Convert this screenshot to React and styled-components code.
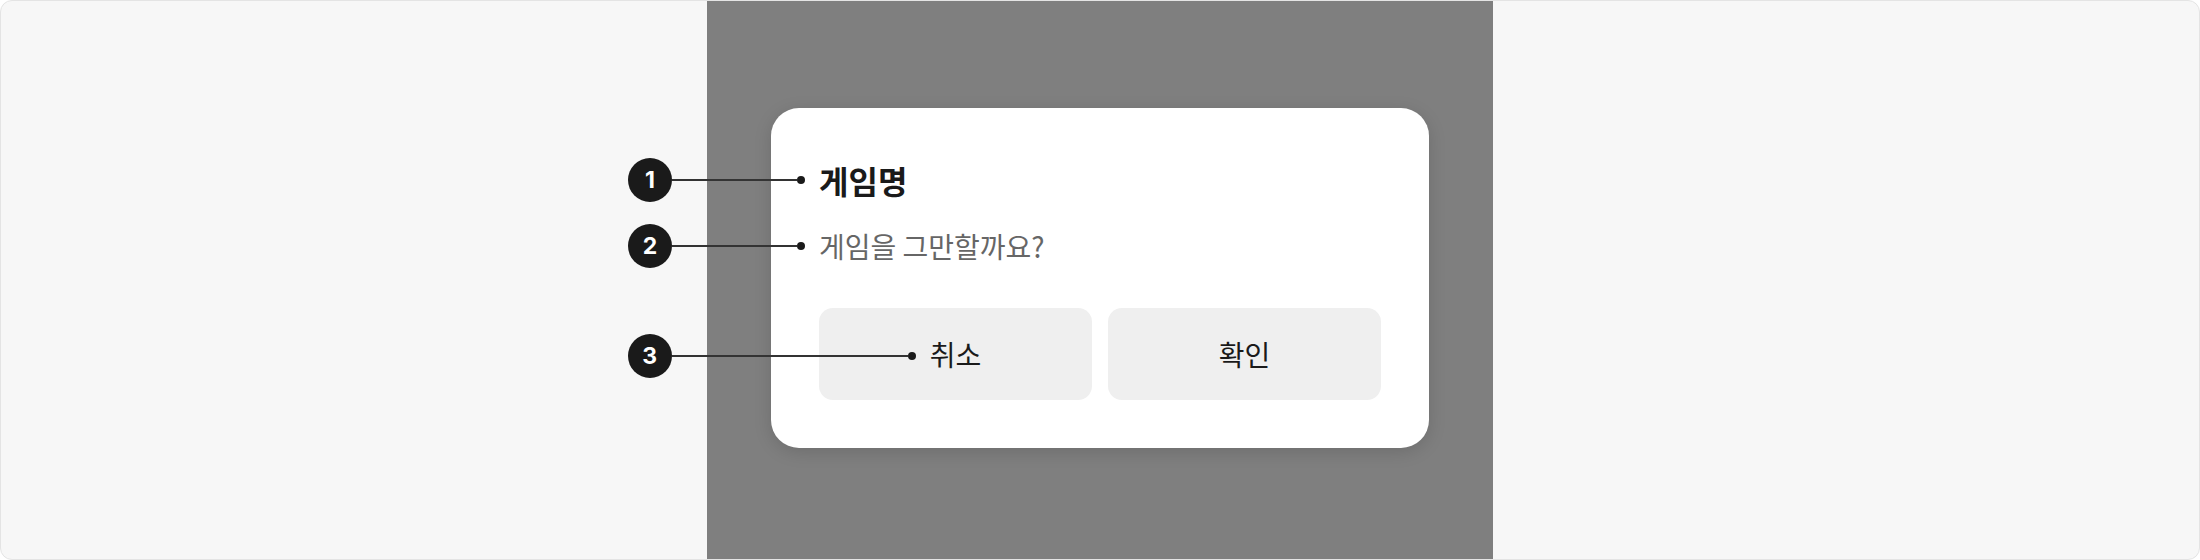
import React from "react";
import styled, { createGlobalStyle } from "styled-components";

const GlobalStyle = createGlobalStyle`
  html, body {
    margin: 0;
    padding: 0;
    background: #ffffff;
  }
  body {
    font-family: "Noto Sans CJK KR", "Noto Sans", sans-serif;
  }
  * { box-sizing: border-box; }
`;

const Frame = styled.div`
  width: 2200px;
  height: 560px;
  background: #f7f7f7;
  border: 1px solid #e4e4e4;
  border-radius: 12px;
  overflow: hidden;
  display: flex;
  justify-content: center;
`;

const Backdrop = styled.div`
  width: 786px;
  height: 100%;
  background: #7f7f7f;
  display: flex;
  align-items: center;
  justify-content: center;
  padding-bottom: 4px;
`;

const Dialog = styled.div`
  width: 658px;
  background: #ffffff;
  border-radius: 28px;
  padding: 48px;
  box-shadow: 0 4px 18px rgba(0, 0, 0, 0.14);
  display: flex;
  flex-direction: column;
`;

const Title = styled.h2`
  margin: 0;
  font-size: 32px;
  line-height: 48px;
  font-weight: 700;
  color: #1a1a1a;
`;

const Message = styled.p`
  margin: 22px 0 0;
  font-size: 28px;
  line-height: 40px;
  font-weight: 400;
  color: #666666;
`;

const Actions = styled.div`
  margin-top: 42px;
  display: grid;
  grid-template-columns: 1fr 1fr;
  gap: 16px;
`;

const ActionButton = styled.button`
  height: 92px;
  border: none;
  border-radius: 14px;
  background: #efefef;
  color: #1a1a1a;
  font-family: inherit;
  font-size: 28px;
  line-height: 40px;
  font-weight: 400;
  display: flex;
  align-items: center;
  justify-content: center;
  cursor: pointer;
`;

/* Annotated text: the callout hangs off the left edge of the label */
const Anchor = styled.span`
  position: relative;
  display: inline-block;
`;

const Callout = styled.span`
  position: absolute;
  top: 50%;
  right: calc(100% + 14px);
  width: ${(p) => p.$reach}px;
  height: 44px;
  margin-top: ${(p) => -22 + (p.$shift || 0)}px;
  display: flex;
  align-items: center;
  pointer-events: none;
`;

const Badge = styled.span`
  flex: none;
  width: 44px;
  height: 44px;
  border-radius: 50%;
  background: #1a1a1a;
  color: #ffffff;
  font-family: Inter, "Noto Sans", sans-serif;
  font-size: 23px;
  line-height: 1;
  font-weight: 700;
  display: flex;
  align-items: center;
  justify-content: center;
`;

const Leader = styled.span`
  flex: 1;
  height: 2px;
  background: #333333;
`;

const Dot = styled.span`
  flex: none;
  width: 8px;
  height: 8px;
  border-radius: 50%;
  background: #1a1a1a;
`;

function Marked({ n, reach, shift, children }) {
  return (
    <Anchor>
      <Callout $reach={reach} $shift={shift}>
        <Badge>{n}</Badge>
        <Leader />
        <Dot />
      </Callout>
      {children}
    </Anchor>
  );
}

export default function App() {
  return (
    <>
      <GlobalStyle />
      <Frame>
        <Backdrop>
          <Dialog>
            <Title>
              <Marked n={1} reach={177}>게임명</Marked>
            </Title>
            <Message>
              <Marked n={2} reach={177}>게임을 그만할까요?</Marked>
            </Message>
            <Actions>
              <ActionButton>
                <Marked n={3} reach={288} shift={2}>취소</Marked>
              </ActionButton>
              <ActionButton>확인</ActionButton>
            </Actions>
          </Dialog>
        </Backdrop>
      </Frame>
    </>
  );
}
